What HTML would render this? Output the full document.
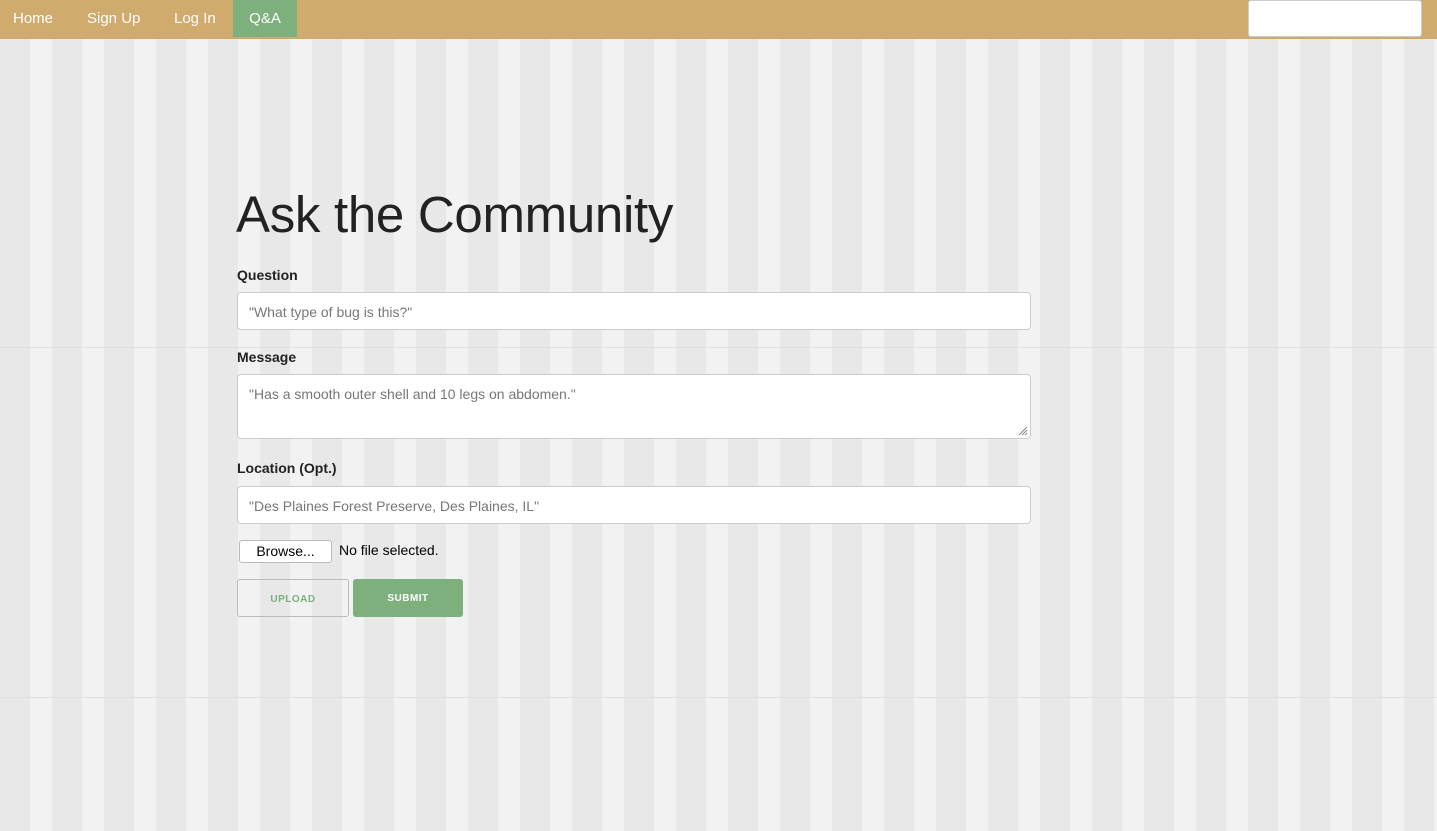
<!DOCTYPE html>
<html><head><style>
body{margin:0;width:1437px;height:831px;overflow:hidden;font-family:"Liberation Sans",sans-serif;
background:#f2f2f2 repeating-linear-gradient(90deg,#e8e8e8 0 30px,#f2f2f2 30px 52px);position:relative}
.nav{position:absolute;left:0;top:0;width:1437px;height:38px;background:#d1ab6d;border-bottom:1px solid #c9a86e}
.nav a{position:absolute;top:0;height:37px;line-height:37px;color:#fff;font-size:15px;text-decoration:none}
.srch{position:absolute;left:1248px;top:0;width:172px;height:35px;background:#fff;border:1px solid #ccc;border-radius:3px}
h1{position:absolute;left:236px;top:185px;margin:0;font-weight:normal;font-size:51px;color:#222;letter-spacing:-0.3px}
label{position:absolute;left:237px;font-weight:bold;font-size:14px;color:#222}
.in{position:absolute;left:237px;width:794px;background:#fff;border:1px solid #ccc;border-radius:4px;font-size:14px;color:#777;padding-left:11px;box-sizing:border-box}
.hl{position:absolute;left:0;width:1437px;height:1px;background:#e0e0e0}
</style></head><body>
<div class="hl" style="top:347px"></div><div class="hl" style="top:697px"></div>
<div class="nav">
<a style="left:13px">Home</a><a style="left:87px">Sign Up</a><a style="left:174px">Log In</a>
<a style="left:233px;width:64px;background:#7db07d;text-align:center">Q&amp;A</a>
</div>
<div class="srch"></div>
<h1>Ask the Community</h1>
<label style="top:267px">Question</label>
<div class="in" style="top:292px;height:38px;line-height:38px">"What type of bug is this?"</div>
<label style="top:349px">Message</label>
<div class="in" style="top:374px;height:65px;padding-top:11px">"Has a smooth outer shell and 10 legs on abdomen."
<svg style="position:absolute;right:2px;bottom:2px" width="10" height="10"><path d="M9 1L1 9M9 4L4 9M9 7L7 9" stroke="#888" stroke-width="1"/></svg></div>
<label style="top:460px">Location (Opt.)</label>
<div class="in" style="top:486px;height:38px;line-height:38px">"Des Plaines Forest Preserve, Des Plaines, IL"</div>
<div style="position:absolute;left:239px;top:540px;width:91px;height:21px;background:#fff;border:1px solid #bbb;border-radius:3px;font-size:14px;line-height:20px;text-align:center;color:#000">Browse...</div>
<div style="position:absolute;left:339px;top:542px;font-size:14px;color:#000">No file selected.</div>
<div style="position:absolute;left:237px;top:579px;width:110px;height:36px;border:1px solid #bbb;border-radius:3px;font-size:10px;font-weight:bold;color:#7db07d;text-align:center;line-height:39px;letter-spacing:0.5px">UPLOAD</div>
<div style="position:absolute;left:353px;top:579px;width:110px;height:38px;background:#7db07d;border-radius:3px;font-size:10px;font-weight:bold;color:#fff;text-align:center;line-height:40px;letter-spacing:0.5px">SUBMIT</div>
</body></html>
